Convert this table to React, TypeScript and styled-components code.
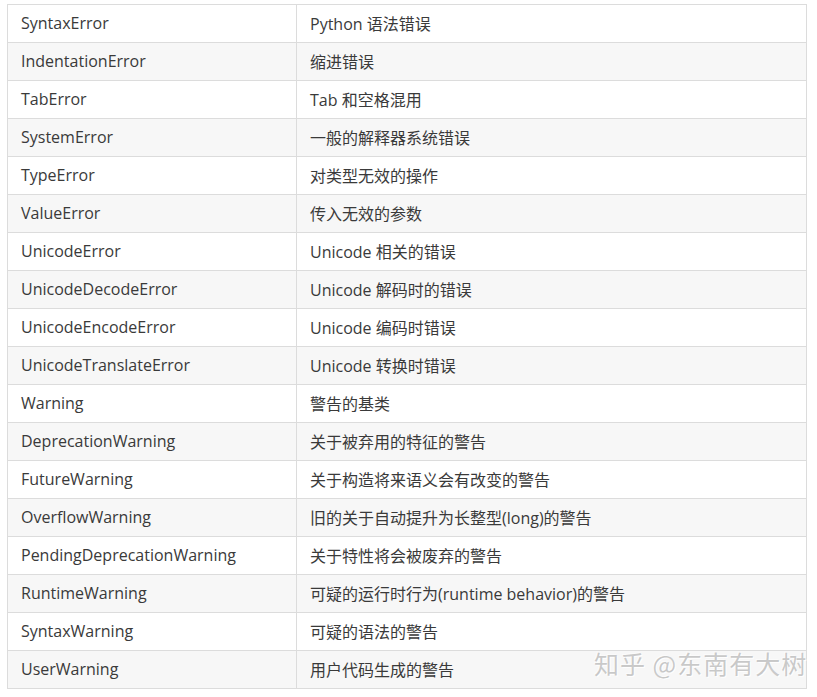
import React from "react";
import styled, { createGlobalStyle } from "styled-components";

const GlobalStyle = createGlobalStyle`
  body {
    margin: 0;
    background: #fff;
    font-family: "Open Sans", "Noto Sans CJK SC", sans-serif;
  }
`;

const Page = styled.div`
  position: relative;
  width: 817px;
  height: 697px;
  padding: 4px 0 0 7px;
  box-sizing: border-box;
`;

const Table = styled.div`
  width: 800px;
  border: 1px solid #dcdcdc;
  box-sizing: border-box;
`;

const Row = styled.div<{ $odd: boolean }>`
  display: grid;
  grid-template-columns: 288px 1fr;
  height: 38px;
  background: ${(p) => (p.$odd ? "#f7f7f7" : "#fff")};
  border-top: 1px solid #dcdcdc;
  box-sizing: border-box;
  &:first-child {
    border-top: none;
    height: 37px;
  }
`;

const Cell = styled.div`
  display: flex;
  align-items: center;
  padding: 0 0 2px 13px;
  font-size: 16px;
  color: #3a3a3a;
  & + & {
    border-left: 1px solid #dcdcdc;
  }
`;

const Watermark = styled.div`
  position: absolute;
  left: 594px;
  top: 645px;
  font-family: "Noto Sans CJK SC", sans-serif;
  font-size: 25px;
  letter-spacing: 1px;
  color: rgba(150, 150, 150, 0.5);
  text-shadow: 1px 1px 0 rgba(255, 255, 255, 0.9), -1px -1px 0 rgba(255, 255, 255, 0.6);
`;

const rows: [string, string][] = [
  ["SyntaxError", "Python 语法错误"],
  ["IndentationError", "缩进错误"],
  ["TabError", "Tab 和空格混用"],
  ["SystemError", "一般的解释器系统错误"],
  ["TypeError", "对类型无效的操作"],
  ["ValueError", "传入无效的参数"],
  ["UnicodeError", "Unicode 相关的错误"],
  ["UnicodeDecodeError", "Unicode 解码时的错误"],
  ["UnicodeEncodeError", "Unicode 编码时错误"],
  ["UnicodeTranslateError", "Unicode 转换时错误"],
  ["Warning", "警告的基类"],
  ["DeprecationWarning", "关于被弃用的特征的警告"],
  ["FutureWarning", "关于构造将来语义会有改变的警告"],
  ["OverflowWarning", "旧的关于自动提升为长整型(long)的警告"],
  ["PendingDeprecationWarning", "关于特性将会被废弃的警告"],
  ["RuntimeWarning", "可疑的运行时行为(runtime behavior)的警告"],
  ["SyntaxWarning", "可疑的语法的警告"],
  ["UserWarning", "用户代码生成的警告"],
];

export default function App() {
  return (
    <Page>
      <GlobalStyle />
      <Table>
        {rows.map(([name, desc], i) => (
          <Row key={name} $odd={i % 2 === 1}>
            <Cell>{name}</Cell>
            <Cell>{desc}</Cell>
          </Row>
        ))}
      </Table>
      <Watermark>知乎 @东南有大树</Watermark>
    </Page>
  );
}
